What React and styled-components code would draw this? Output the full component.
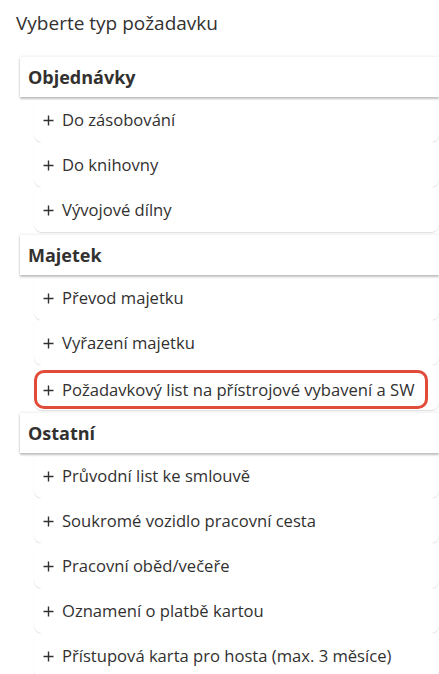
import React from 'react';
import styled, { createGlobalStyle } from 'styled-components';

const GlobalStyle = createGlobalStyle`
  body {
    margin: 0;
    background: #ffffff;
    font-family: "Open Sans", "Noto Sans", sans-serif;
    color: #323130;
  }
`;

const Page = styled.div`
  width: 439px;
  height: 674px;
  overflow: hidden;
  background: #ffffff;
`;

const TitleBar = styled.div`
  height: 57px;
  box-sizing: border-box;
  padding: 10px 16px 0;
  font-size: 19px;
  color: #323130;
`;

const List = styled.div`
  padding-left: 20px;
  display: flex;
  flex-direction: column;
`;

const Section = styled.div`
  display: flex;
  flex-direction: column;
  margin-top: ${props => (props.first ? '0' : '3px')};
`;

const SectionHeader = styled.div`
  height: 40px;
  display: flex;
  align-items: center;
  padding-left: 8px;
  font-size: 18px;
  font-weight: 700;
  color: #323130;
  background: #ffffff;
  box-shadow: 0 0 3px rgba(0, 0, 0, 0.12), 0 2px 2px rgba(0, 0, 0, 0.22);
  position: relative;
  z-index: 1;
`;

const Items = styled.div`
  padding-left: 14px;
  display: flex;
  flex-direction: column;
`;

const Item = styled.div`
  height: 45px;
  display: flex;
  align-items: ${props => (props.active ? 'flex-start' : 'center')};
  padding-left: ${props => (props.active ? '0' : '9px')};
  border-radius: 8px;
  background: #ffffff;
  box-shadow: 0 1px 1px rgba(0, 0, 0, 0.13);
  font-size: 16.6px;
  color: #323130;
  white-space: nowrap;
`;

const Highlight = styled.div`
  flex: 1;
  height: 39px;
  box-sizing: border-box;
  margin: 5px 11px 0 0;
  padding-left: 6px;
  display: flex;
  align-items: center;
  border: 3px solid #e04b3a;
  border-radius: 10px;
`;

const PlusIcon = styled.svg`
  width: 11px;
  height: 11px;
  margin-right: 8px;
  flex-shrink: 0;
  margin-top: 1px;
`;

const Plus = () => (
  <PlusIcon viewBox="0 0 11 11">
    <path d="M5.5 0.5v10M0.5 5.5h10" stroke="#323130" strokeWidth="1.4" fill="none" />
  </PlusIcon>
);

const groups = [
  {
    title: 'Objednávky',
    items: ['Do zásobování', 'Do knihovny', 'Vývojové dílny'],
  },
  {
    title: 'Majetek',
    items: ['Převod majetku', 'Vyřazení majetku', 'Požadavkový list na přístrojové vybavení a SW'],
    active: 2,
  },
  {
    title: 'Ostatní',
    items: [
      'Průvodní list ke smlouvě',
      'Soukromé vozidlo pracovní cesta',
      'Pracovní oběd/večeře',
      'Oznamení o platbě kartou',
      'Přístupová karta pro hosta (max. 3 měsíce)',
    ],
  },
];

export default function App() {
  return (
    <Page>
      <GlobalStyle />
      <TitleBar>Vyberte typ požadavku</TitleBar>
      <List>
        {groups.map((g, gi) => (
          <Section key={g.title} first={gi === 0}>
            <SectionHeader>{g.title}</SectionHeader>
            <Items>
              {g.items.map((label, i) =>
                g.active === i ? (
                  <Item key={label} active>
                    <Highlight>
                      <Plus />
                      {label}
                    </Highlight>
                  </Item>
                ) : (
                  <Item key={label}>
                    <Plus />
                    {label}
                  </Item>
                )
              )}
            </Items>
          </Section>
        ))}
      </List>
    </Page>
  );
}
